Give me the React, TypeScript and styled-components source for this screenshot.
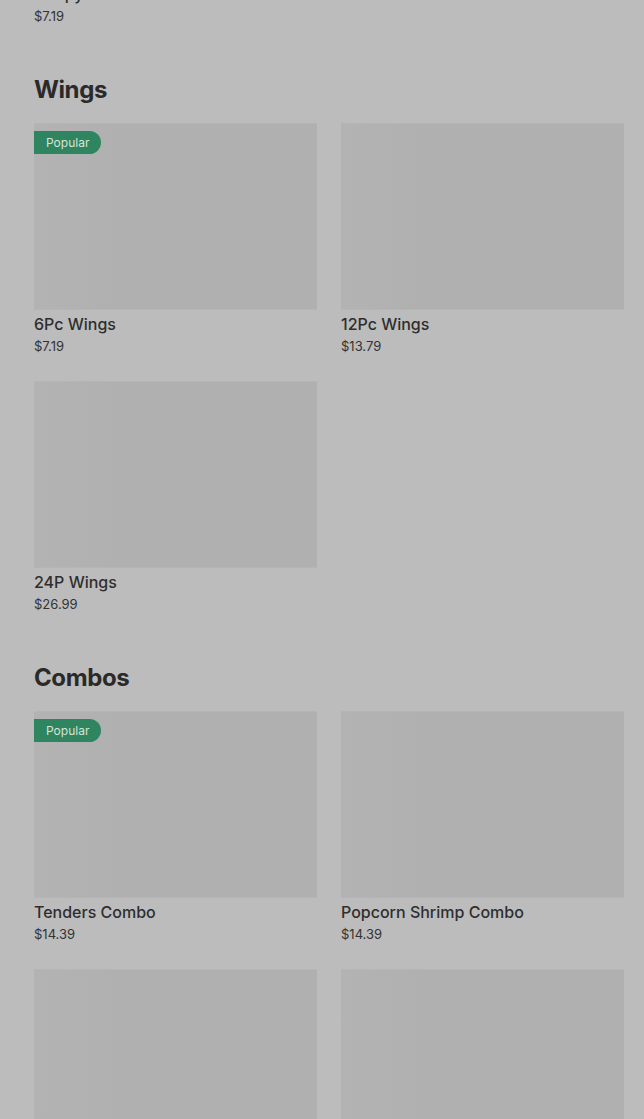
import styled, { createGlobalStyle } from "styled-components";

interface Item {
  name: string;
  price: string;
  popular?: boolean;
}

interface Section {
  title: string;
  items: Item[];
}

const sections: Section[] = [
  {
    title: "Wings",
    items: [
      { name: "6Pc Wings", price: "$7.19", popular: true },
      { name: "12Pc Wings", price: "$13.79" },
      { name: "24P Wings", price: "$26.99" },
    ],
  },
  {
    title: "Combos",
    items: [
      { name: "Tenders Combo", price: "$14.39", popular: true },
      { name: "Popcorn Shrimp Combo", price: "$14.39" },
      { name: "Wings Combo", price: "$13.59" },
      { name: "Sandwich Combo", price: "$12.99" },
    ],
  },
];

function Card({ name, price, popular }: Item) {
  return (
    <CardWrap>
      <Thumb>{popular && <Badge>Popular</Badge>}</Thumb>
      <Name>{name}</Name>
      <Price>{price}</Price>
    </CardWrap>
  );
}

export default function App() {
  return (
    <>
      <GlobalStyle />
      <Page>
        {/* tail of the previous section, scrolled mostly out of view */}
        <Grid $offset>
          <Card name="Crispy Chicken Sandwich" price="$7.19" />
        </Grid>
        {sections.map((s) => (
          <SectionWrap key={s.title}>
            <Heading>{s.title}</Heading>
            <Grid>
              {s.items.map((it) => (
                <Card key={it.name} {...it} />
              ))}
            </Grid>
          </SectionWrap>
        ))}
      </Page>
    </>
  );
}

const GlobalStyle = createGlobalStyle`
  html, body {
    margin: 0;
    padding: 0;
    background: #bcbcbc;
    overflow: hidden;
  }
  body {
    font-family: "Inter", "Liberation Sans", sans-serif;
    color: #2b2b2b;
  }
`;

const Page = styled.div`
  padding: 0 20px 40px 34px;
  background: #bcbcbc;
`;

const SectionWrap = styled.section`
  margin-top: 48px;
`;

const Heading = styled.h2`
  margin: 0 0 17px;
  font-size: 24px;
  line-height: 32px;
  font-weight: 700;
  letter-spacing: -0.4px;
  color: #2a2a2a;
`;

const Grid = styled.div<{ $offset?: boolean }>`
  display: grid;
  grid-template-columns: 1fr 1fr;
  column-gap: 24px;
  row-gap: 25px;
  margin-top: ${(p) => (p.$offset ? "-207px" : "0")};
`;

const CardWrap = styled.div`
  display: flex;
  flex-direction: column;
`;

const Thumb = styled.div`
  position: relative;
  height: 187px;
  background: linear-gradient(90deg, #b3b3b3 0%, #b0b0b0 30%, #b0b0b0 100%);
  box-shadow: inset 0 1px 0 #b5b5b5, inset 0 -1px 0 #b5b5b5;
`;

const Badge = styled.span`
  position: absolute;
  top: 8px;
  left: 0;
  height: 23px;
  padding: 0 12px;
  display: flex;
  align-items: center;
  background: #2f8560;
  color: #d4e4da;
  font-size: 12px;
  font-weight: 400;
  border-radius: 0 12px 12px 0;
`;

const Name = styled.div`
  margin-top: 3px;
  font-size: 16px;
  line-height: 22px;
  font-weight: 500;
  color: #2e2e2e;
`;

const Price = styled.div`
  margin-top: 1px;
  font-size: 13px;
  line-height: 20px;
  color: #333;
`;
